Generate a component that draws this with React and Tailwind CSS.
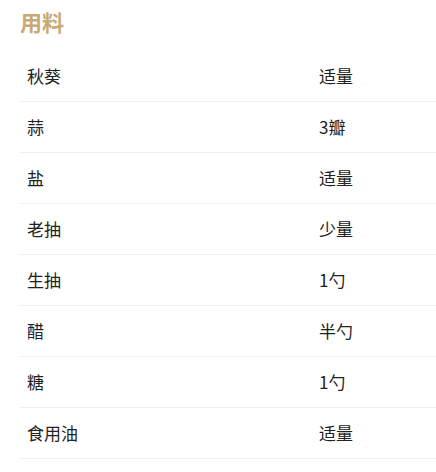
export default function App() {
  const rows = [
    ["秋葵", "适量"],
    ["蒜", "3瓣"],
    ["盐", "适量"],
    ["老抽", "少量"],
    ["生抽", "1勺"],
    ["醋", "半勺"],
    ["糖", "1勺"],
    ["食用油", "适量"],
  ];
  return (
    <div
      className="w-[436px] h-[472px] bg-white overflow-hidden pl-[19px]"
      style={{ fontFamily: '"Noto Sans CJK SC", "Noto Sans", sans-serif' }}
    >
      <h2 className="text-[22px] font-bold text-[#c8aa76] leading-[30px] pt-[6px] pl-[1px] h-[51px]">
        用料
      </h2>
      <div className="flex flex-col w-[417px]">
        {rows.map(([a, b], i) => (
          <div
            key={i}
            className="flex h-[51px] items-center border-b border-[#f0f0f0] text-[17px] text-[#222]"
          >
            <div className="w-[292px] pl-[8px]">{a}</div>
            <div className="flex-1 pl-[8px]">{b}</div>
          </div>
        ))}
      </div>
    </div>
  );
}
